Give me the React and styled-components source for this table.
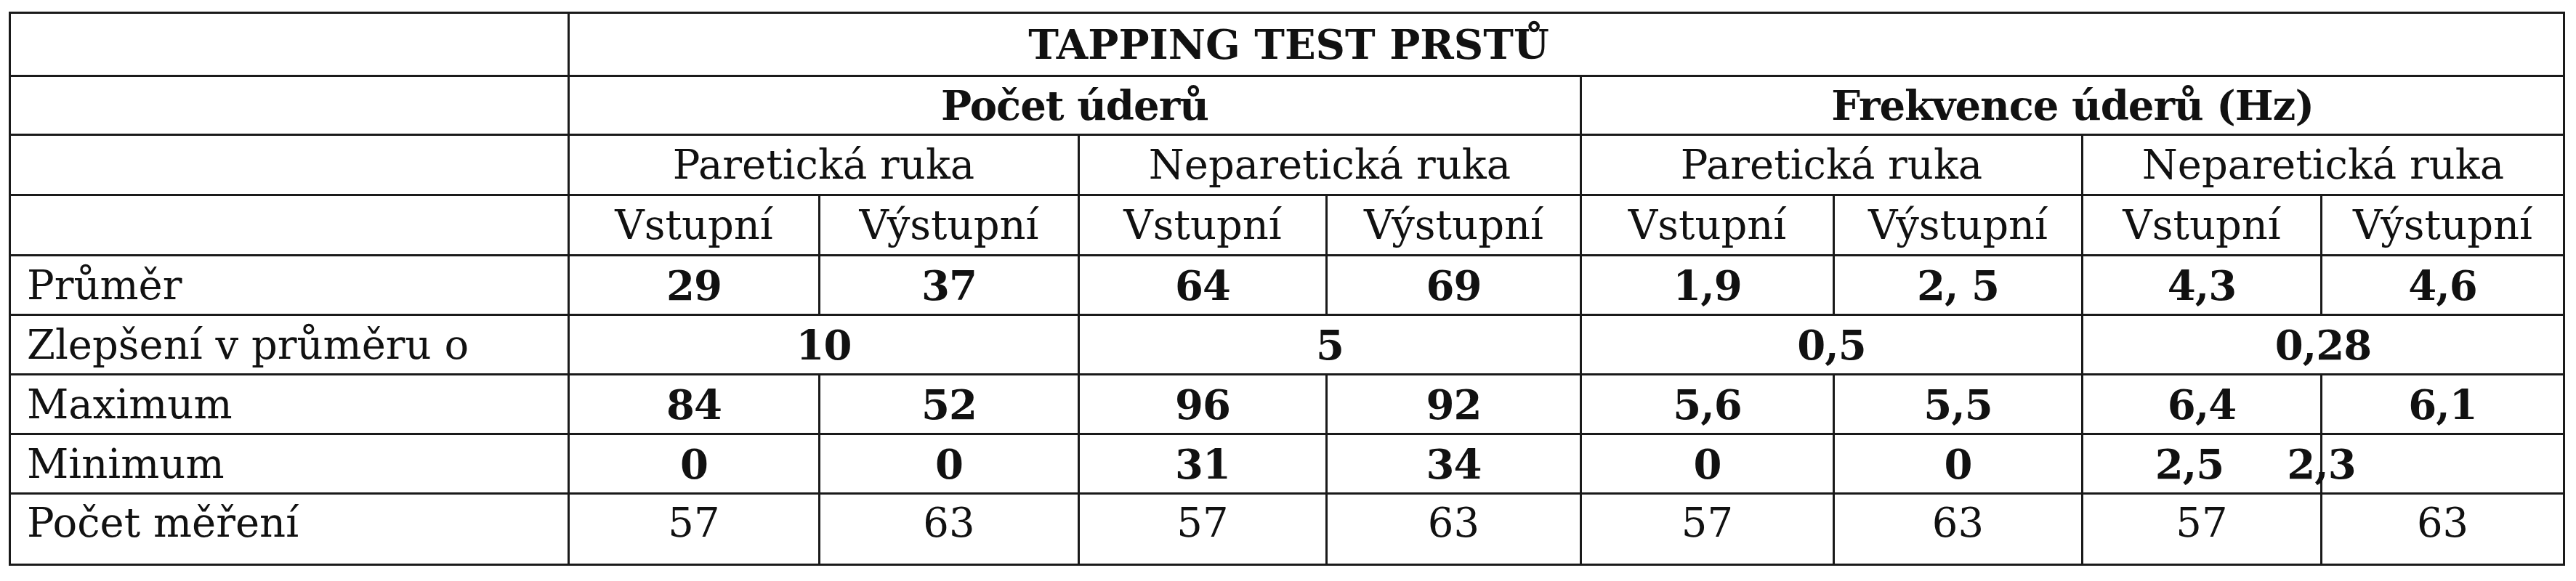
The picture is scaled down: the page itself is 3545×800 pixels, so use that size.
import React from "react";
import styled, { createGlobalStyle, css } from "styled-components";

const GlobalStyle = createGlobalStyle`
  html, body {
    margin: 0;
    padding: 0;
    background: #ffffff;
  }
`;

// column widths measured from the scan (label column + 8 data columns)
const COLS = [769, 345, 357, 341, 350, 348, 342, 329, 334];

const headRows = [
  { height: 87 },
  { height: 81 },
  { height: 83 },
  { height: 83 }
];

const dataRows = [
  {
    label: "Průměr",
    bold: true,
    values: ["29", "37", "64", "69", "1,9", "2, 5", "4,3", "4,6"]
  },
  {
    label: "Zlepšení v průměru o",
    bold: true,
    merged: true,
    values: ["10", "5", "0,5", "0,28"]
  },
  {
    label: "Maximum",
    bold: true,
    values: ["84", "52", "96", "92", "5,6", "5,5", "6,4", "6,1"]
  },
  {
    label: "Minimum",
    bold: true,
    values: ["0", "0", "31", "34", "0", "0", "2,5", "2,3"],
    // the last two values sit off-centre in the scan, "2,3" even crosses the rule
    shifts: [0, 0, 0, 0, 0, 0, -17, -167]
  },
  {
    label: "Počet měření",
    bold: false,
    last: true,
    values: ["57", "63", "57", "63", "57", "63", "57", "63"]
  }
];

function App() {
  return (
    <Page>
      <GlobalStyle />
      <Table>
        <colgroup>
          {COLS.map((w, i) => (
            <col key={i} style={{ width: w }} />
          ))}
        </colgroup>
        <tbody>
          <Row height={headRows[0].height}>
            <LabelCell />
            <Cell colSpan={8} bold title>
              {/* title is centred on the whole table, not on its own cell */}
              <Value shift={-382}>TAPPING TEST PRSTŮ</Value>
            </Cell>
          </Row>
          <Row height={headRows[1].height}>
            <LabelCell />
            <Cell colSpan={4} bold>
              Počet úderů
            </Cell>
            <Cell colSpan={4} bold>
              Frekvence úderů (Hz)
            </Cell>
          </Row>
          <Row height={headRows[2].height}>
            <LabelCell />
            <Cell colSpan={2}>Paretická ruka</Cell>
            <Cell colSpan={2}>Neparetická ruka</Cell>
            <Cell colSpan={2}>Paretická ruka</Cell>
            <Cell colSpan={2}>Neparetická ruka</Cell>
          </Row>
          <Row height={headRows[3].height}>
            <LabelCell />
            {[0, 1, 2, 3].map(i => (
              <React.Fragment key={i}>
                <Cell>Vstupní</Cell>
                <Cell>Výstupní</Cell>
              </React.Fragment>
            ))}
          </Row>

          {dataRows.map(row => (
            <Row key={row.label} height={row.last ? 98 : 82}>
              <LabelCell last={row.last}>{row.label}</LabelCell>
              {row.values.map((v, i) => (
                <Cell
                  key={i}
                  colSpan={row.merged ? 2 : 1}
                  bold={row.bold}
                  last={row.last}
                >
                  <Value shift={row.shifts ? row.shifts[i] : 0}>{v}</Value>
                </Cell>
              ))}
            </Row>
          ))}
        </tbody>
      </Table>
    </Page>
  );
}

export default App;

const Page = styled.div`
  padding: 16px 0 0 12px;
  font-family: "DejaVu Serif", "Liberation Serif", serif;
  color: #111111;
`;

const Table = styled.table`
  border-collapse: collapse;
  table-layout: fixed;
  width: 3515px;
  border: 3px solid #1e1e1e;
`;

const Row = styled.tr`
  height: ${props => props.height}px;
`;

const cellBase = css`
  border: 3px solid #1a1a1a;
  padding: 0;
  font-size: 56px;
  line-height: 1;
  vertical-align: middle;
  white-space: nowrap;
`;

const Cell = styled.td`
  ${cellBase};
  text-align: center;
  font-weight: ${props => (props.bold ? 700 : 400)};
  letter-spacing: ${props => (props.bold && !props.title ? "-1px" : "0")};

  ${props =>
    props.last &&
    css`
      padding-bottom: 18px;
    `};
`;

const LabelCell = styled.td`
  ${cellBase};
  text-align: left;
  padding-left: 22px;

  ${props =>
    props.last &&
    css`
      padding-bottom: 18px;
    `};
`;

const Value = styled.span`
  display: inline-block;
  transform: translateX(${props => props.shift}px);
`;
